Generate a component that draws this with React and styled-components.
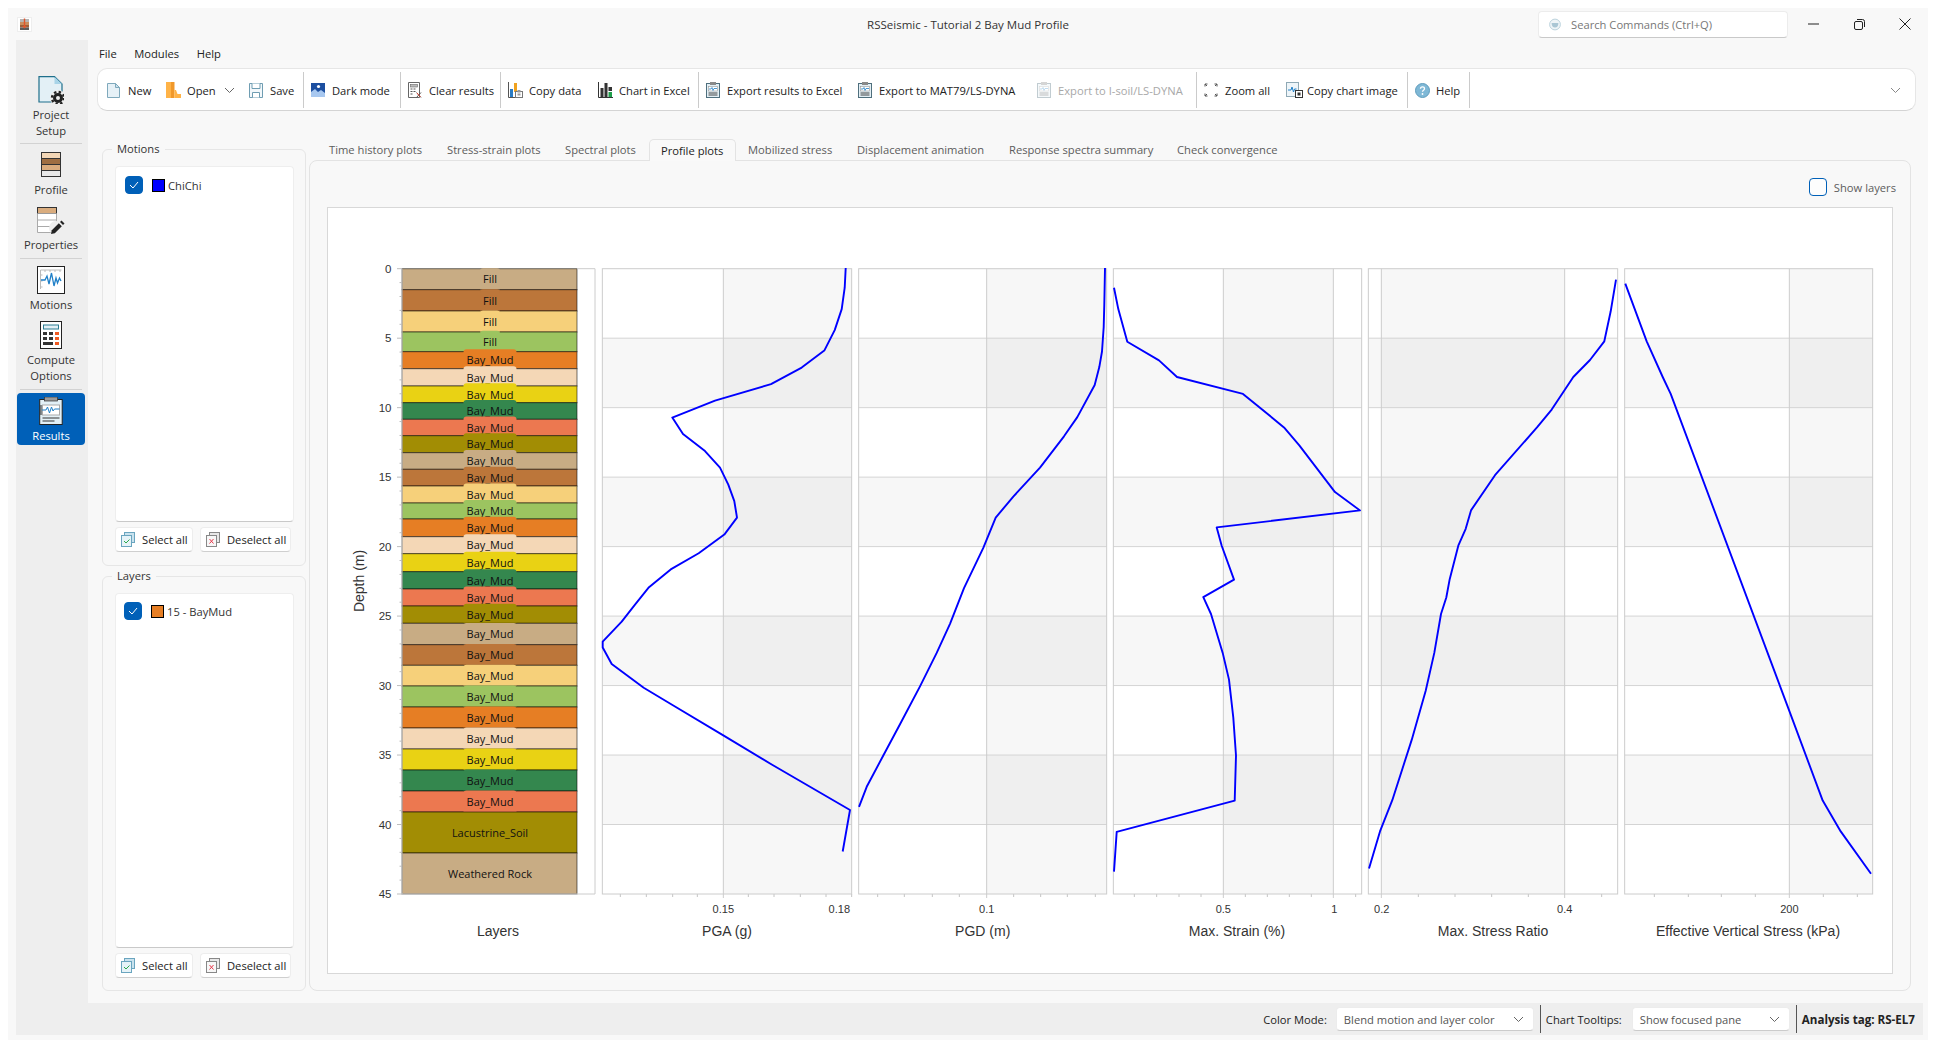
import React from "react";
import styled, { createGlobalStyle } from "styled-components";

const UI_FONT = `"Open Sans", "Noto Sans", sans-serif`;
const CHART_FONT = `"Liberation Sans", Arial, sans-serif`;

const GlobalStyle = createGlobalStyle`
  html, body {
    margin: 0;
    padding: 0;
    background: #ffffff;
    overflow: hidden;
  }
  body {
    font-family: ${UI_FONT};
    font-size: 11.2px;
    color: #222;
  }
  * { box-sizing: border-box; }
  svg { display: block; flex: none; }
`;

const Window = styled.div`
  width: 1920px;
  height: 1032px;
  margin: 8px;
  background: #f8f8f8;
  display: flex;
  flex-direction: column;
`;

const TitleBar = styled.div`
  height: 32px;
  flex: none;
  display: grid;
  grid-template-columns: 1fr auto 1fr;
  align-items: center;
`;

const TitleLeft = styled.div`
  padding-left: 9px;
`;

const TitleText = styled.div`
  font-size: 11.5px;
  color: #333;
`;

const TitleRight = styled.div`
  display: flex;
  justify-content: flex-end;
  align-items: center;
`;

const SearchBox = styled.div`
  width: 250px;
  height: 27px;
  margin-right: 2px;
  padding-left: 10px;
  display: flex;
  align-items: center;
  gap: 10px;
  background: #fff;
  border: 1px solid #ececec;
  border-bottom-color: #c9c9c9;
  border-radius: 4px;
  color: #777;
`;

const WinButton = styled.div`
  width: 46px;
  height: 32px;
  display: flex;
  align-items: center;
  justify-content: center;
`;

const Body = styled.div`
  flex: 1;
  min-height: 0;
  display: flex;
  padding: 0 5px 0 8px;
`;

const Sidebar = styled.nav`
  width: 72px;
  flex: none;
  background: #eeeeee;
  padding: 36px 3px 0 1px;
  display: flex;
  flex-direction: column;
  color: #333;
`;

const SideItem = styled.div`
  margin-top: ${(p) => p.$mt || 0}px;
  display: flex;
  flex-direction: column;
  align-items: center;
`;

const SideLabel = styled.div`
  margin-top: ${(p) => p.$mt || 3}px;
  line-height: 16px;
  text-align: center;
`;

const SideDivider = styled.div`
  height: 1px;
  flex: none;
  margin: ${(p) => p.$mt || 4}px 3px 0;
  background: #d2d2d2;
`;

const ResultsItem = styled.div`
  margin-top: 3px;
  height: 52px;
  padding-top: 4px;
  border-radius: 4px;
  background: #0060b8;
  display: flex;
  flex-direction: column;
  align-items: center;
  color: #fff;
`;

const Main = styled.main`
  flex: 1;
  min-width: 0;
  display: flex;
  flex-direction: column;
  padding-bottom: 12px;
`;

const MenuBar = styled.div`
  height: 28px;
  flex: none;
  padding: 0 0 2px 11px;
  display: flex;
  align-items: center;
  gap: 17.5px;
  color: #222;
`;

const Toolbar = styled.div`
  height: 43px;
  flex: none;
  margin: 0 7px 0 9px;
  padding: 1px 14px 0 9px;
  display: flex;
  align-items: center;
  background: #fff;
  border: 1px solid #e6e6e6;
  border-bottom-color: #d4d4d4;
  border-radius: 10px;
  white-space: nowrap;
`;

const ToolButton = styled.div`
  width: ${(p) => p.$w}px;
  flex: none;
  display: flex;
  align-items: center;
  color: ${(p) => (p.$disabled ? "#a8a8a8" : "#222")};
`;

const IconSlot = styled.span`
  width: 21px;
  flex: none;
  display: flex;
  align-items: center;
`;

const ToolSeparator = styled.div`
  width: 1px;
  height: 36px;
  flex: none;
  margin: -1px 7px 0 0;
  background: #cbcbcb;
`;

const ToolChevron = styled.div`
  margin-left: auto;
`;

const OpenChevron = styled.span`
  margin-left: 8px;
`;

const Content = styled.div`
  flex: 1;
  min-height: 0;
  margin-top: 28px;
  display: flex;
`;

const LeftColumn = styled.div`
  width: 207px;
  flex: none;
  margin-left: 14px;
  display: flex;
  flex-direction: column;
  gap: 2px;
  padding-top: 2px;
`;

const Group = styled.fieldset`
  width: 204px;
  height: ${(p) => p.$h}px;
  flex: none;
  margin: 0;
  padding: 1px 11px 13px 12px;
  border: 1px solid #e6e6e6;
  border-radius: 6px;
  min-width: 0;
`;

const GroupLegend = styled.legend`
  margin-left: -3px;
  padding: 0 5px;
  line-height: 16px;
  color: #333;
`;

const ListBox = styled.div`
  height: ${(p) => p.$h}px;
  margin-top: 8px;
  background: #fff;
  border: 1px solid #eeeeee;
  border-bottom-color: #c9c9c9;
  border-radius: 4px;
  padding: ${(p) => p.$top}px 0 0 ${(p) => p.$left}px;
`;

const ListRow = styled.div`
  display: flex;
  align-items: center;
  color: #333;
`;

const CheckBox = styled.span`
  width: 18px;
  height: 18px;
  flex: none;
  border-radius: 4px;
  background: ${(p) => (p.$on ? "#0060b8" : "#fdfdfd")};
  border: 1px solid #0060b8;
  display: flex;
  align-items: center;
  justify-content: center;
`;

const Swatch = styled.span`
  width: 13px;
  height: 13px;
  flex: none;
  margin: 0 3px 0 9px;
  background: ${(p) => p.$color};
  border: 1px solid #000;
`;

const ButtonRow = styled.div`
  margin-top: 5px;
  display: flex;
  gap: 7px;
`;

const SmallButton = styled.div`
  width: ${(p) => p.$w}px;
  height: 25px;
  padding-left: 5px;
  display: flex;
  align-items: center;
  gap: 7px;
  background: #fff;
  border: 1px solid #ededed;
  border-bottom-color: #cfcfcf;
  border-radius: 4px;
  white-space: nowrap;
`;

const TabColumn = styled.div`
  flex: 1;
  min-width: 0;
  margin-right: 12px;
  display: flex;
  flex-direction: column;
`;

const TabRow = styled.div`
  height: 21px;
  flex: none;
  padding-left: 8px;
  display: flex;
  position: relative;
  z-index: 1;
`;

const Tab = styled.div`
  width: ${(p) => p.$w}px;
  height: ${(p) => (p.$active ? 22 : 21)}px;
  flex: none;
  padding-left: ${(p) => (p.$active ? 11 : 12)}px;
  display: flex;
  align-items: center;
  white-space: nowrap;
  color: ${(p) => (p.$active ? "#222" : "#5c5c5c")};
  background: ${(p) => (p.$active ? "#f9f9f9" : "transparent")};
  border: ${(p) => (p.$active ? "1px solid #e3e3e3" : "none")};
  border-bottom: none;
  border-radius: 5px 5px 0 0;
`;

const TabPanel = styled.div`
  flex: 1;
  min-height: 0;
  border: 1px solid #e3e3e3;
  border-radius: 8px;
  padding: 17px 17px 16px 17px;
  display: flex;
  flex-direction: column;
`;

const PanelOptions = styled.div`
  height: 18px;
  flex: none;
  margin: 0 -3px 11px 0;
  display: flex;
  justify-content: flex-end;
  align-items: center;
  gap: 7px;
  color: #5c5c5c;
`;

const ChartCard = styled.div`
  flex: 1;
  min-height: 0;
  background: #fff;
  border: 1px solid #d8d8d8;
`;

const Footer = styled.footer`
  height: 32px;
  flex: none;
  margin: 0 5px 5px 8px;
  padding-right: 8px;
  background: #eeeeee;
  display: flex;
  justify-content: flex-end;
  align-items: center;
  white-space: nowrap;
`;

const FooterLabel = styled.span`
  margin-right: ${(p) => p.$mr}px;
  color: #222;
`;

const Combo = styled.div`
  width: ${(p) => p.$w}px;
  height: 24px;
  padding: 0 9px 0 7px;
  display: flex;
  align-items: center;
  justify-content: space-between;
  background: #fff;
  border: 1px solid #ececec;
  border-bottom-color: #cbcbcb;
  border-radius: 4px;
  color: #555;
`;

const FooterSeparator = styled.span`
  width: 1px;
  height: 28px;
  margin: 0 5px 0 6px;
  background: #555;
`;

const TagText = styled.b`
  font-size: 11.6px;
  font-weight: 700;
  color: #222;
`;

const AxisTitle = styled.text`
  font-family: ${CHART_FONT};
  font-size: 14px;
  fill: #333;
  text-anchor: middle;
`;

const TickText = styled.text`
  font-family: ${CHART_FONT};
  font-size: 11px;
  fill: #333;
  text-anchor: middle;
`;

const DepthText = styled.text`
  font-family: ${CHART_FONT};
  font-size: 11.5px;
  fill: #333;
  text-anchor: end;
`;

const LayerText = styled.text`
  font-family: ${UI_FONT};
  font-size: 11px;
  fill: #111;
  text-anchor: middle;
`;

/* chart data, in screen pixels of the plot area */
const Y0 = 268.7;
const Y45 = 894;
const depthY = (d) => Y0 + ((Y45 - Y0) * d) / 45;
const zoomY = (Y) => 260 + Y / 2.24;

const COLORS = {
  tan: "#c8ac84",
  brown: "#bc763a",
  light: "#f6d07a",
  green: "#9cc460",
  orange: "#e67e24",
  peach: "#f4d7b6",
  yellow: "#e9d214",
  dark: "#34874e",
  salmon: "#ec7850",
  olive: "#a28d04",
};

const LAYER_CYCLE = ["tan", "brown", "light", "green", "orange", "peach", "yellow", "dark", "salmon", "olive"];
const LAYER_ENDS = [
  289.7, 311, 332, 351.7, 368.7, 386, 402.7, 419.3, 435.7, 452.7, 469.3, 486, 503, 519, 536.7, 553.7, 571.7, 589, 606,
  623.3, 644.7, 665.3, 686, 707, 728, 749, 770, 791, 812, 853, 894,
];
const LAYERS = LAYER_ENDS.map((end, i) => {
  let name = "Bay_Mud";
  if (i < 4) name = "Fill";
  if (i === 29) name = "Lacustrine_Soil";
  if (i === 30) name = "Weathered Rock";
  return {
    end,
    top: i === 0 ? Y0 : LAYER_ENDS[i - 1],
    name,
    color: COLORS[LAYER_CYCLE[i % 10]],
    pill: name === "Fill" ? 20 : name === "Bay_Mud" ? 53 : 0,
  };
});

const PLOTS = [
  {
    title: "PGA (g)",
    titleX: 727,
    ox: 600,
    left: 7,
    right: 755,
    majors: [370],
    minors: [61, 139, 218, 292, 445, 522, 601, 678, 755],
    labels: [["0.15", 370], ["0.18", 718]],
    shade: [370, 755],
    curve: [
      [737, 18], [734, 62], [725, 110], [704, 157], [673, 203], [605, 241], [513, 278], [345, 315], [217, 353],
      [249, 390], [315, 428], [360, 465], [385, 503], [403, 540], [411, 577], [373, 615], [296, 657], [212, 693],
      [147, 733], [105, 772], [65, 810], [8, 855], [8, 868], [35, 905], [131, 958], [220, 998], [370, 1065],
      [515, 1130], [750, 1232], [728, 1325],
    ],
  },
  {
    title: "PGD (m)",
    titleX: 982.7,
    ox: 600,
    left: 776,
    right: 1520,
    majors: [1160],
    minors: [833, 913, 997, 1078, 1241, 1322, 1402, 1486],
    labels: [["0.1", 1160]],
    shade: [1160, 1520],
    curve: [
      [1515, 18], [1513, 100], [1511, 150], [1506, 205], [1498, 240], [1484, 280], [1432, 352], [1392, 395],
      [1320, 465], [1240, 530], [1187, 577], [1150, 645], [1092, 735], [1050, 815], [1010, 880], [960, 955],
      [900, 1040], [850, 1110], [800, 1180], [777, 1225],
    ],
  },
  {
    title: "Max. Strain (%)",
    titleX: 1237,
    ox: 1105,
    left: 25,
    right: 770,
    majors: [355, 685],
    minors: [88, 155, 222, 288, 421, 487, 553, 619, 752],
    labels: [["0.5", 355], ["1", 688]],
    shade: [355, 685],
    curve: [
      [27, 62], [40, 110], [67, 183], [162, 225], [216, 262], [414, 300], [537, 375], [583, 415], [690, 520],
      [765, 561], [335, 599], [350, 640], [387, 716], [295, 755], [318, 793], [353, 880], [372, 940], [385, 1025],
      [393, 1110], [389, 1211], [35, 1281], [27, 1370],
    ],
  },
  {
    title: "Max. Stress Ratio",
    titleX: 1493,
    ox: 1105,
    left: 790,
    right: 1538,
    majors: [829, 1379],
    minors: [940, 1050, 1160, 1270, 1490],
    labels: [["0.2", 830], ["0.4", 1379]],
    shade: [829, 1379],
    curve: [
      [1533, 44], [1517, 115], [1498, 182], [1455, 224], [1405, 262], [1340, 335], [1296, 375], [1170, 482],
      [1098, 561], [1082, 602], [1060, 640], [1034, 715], [1024, 756], [1008, 793], [988, 880], [962, 965],
      [920, 1075], [862, 1210], [825, 1280], [792, 1363],
    ],
  },
  {
    title: "Effective Vertical Stress (kPa)",
    titleX: 1748,
    ox: 1610,
    left: 44,
    right: 788,
    majors: [538],
    minors: [133, 235, 334, 436, 640, 742],
    labels: [["200", 538]],
    shade: [538, 788],
    curve: [
      [46, 53], [110, 182], [158, 262], [182, 300], [538, 1010], [638, 1211], [692, 1280], [783, 1375],
    ],
  },
];

const BANDS = [5, 15, 25, 35];
const GRID_DEPTHS = [5, 10, 15, 20, 25, 30, 35, 40];

const Plot = ({ plot }) => {
  const x = (X) => plot.ox + X / 3;
  const left = x(plot.left);
  const right = x(plot.right);
  const points = plot.curve.map(([X, Y]) => `${x(X).toFixed(1)},${zoomY(Y).toFixed(1)}`).join(" ");
  return (
    <g>
      <rect x={left} y={Y0} width={right - left} height={Y45 - Y0} fill="#fff" />
      {BANDS.map((d) => (
        <rect key={d} x={left} y={depthY(d)} width={right - left} height={depthY(5) - Y0} fill="#f7f7f7" />
      ))}
      <rect
        x={x(plot.shade[0])}
        y={Y0}
        width={x(plot.shade[1]) - x(plot.shade[0])}
        height={Y45 - Y0}
        fill="#000"
        fillOpacity="0.03"
      />
      {GRID_DEPTHS.map((d) => (
        <line key={d} x1={left} x2={right} y1={depthY(d)} y2={depthY(d)} stroke="#d4d4d4" />
      ))}
      {plot.majors.map((m) => (
        <line key={m} x1={x(m)} x2={x(m)} y1={Y0} y2={Y45 + 4} stroke="#cdcdcd" />
      ))}
      {plot.minors.map((m) => (
        <line key={m} x1={x(m)} x2={x(m)} y1={Y45} y2={Y45 + 3} stroke="#c4c4c4" />
      ))}
      <rect x={left} y={Y0} width={right - left} height={Y45 - Y0} fill="none" stroke="#cccccc" />
      <polyline points={points} fill="none" stroke="#0000ff" strokeWidth="1.9" strokeLinejoin="round" />
      {plot.labels.map(([text, X]) => (
        <TickText key={text} x={x(X)} y={913}>
          {text}
        </TickText>
      ))}
      <AxisTitle x={plot.titleX} y={936}>
        {plot.title}
      </AxisTitle>
    </g>
  );
};

const LayersPlot = () => (
  <g>
    <rect x="402" y={Y0} width="193" height={Y45 - Y0} fill="#fff" />
    {LAYERS.map((layer, i) => {
      const mid = (layer.top + layer.end) / 2;
      const isPill = layer.pill > 0;
      return (
        <g key={i}>
          <rect
            x="402"
            y={layer.top}
            width="175"
            height={layer.end - layer.top}
            fill={layer.color}
            stroke="#000"
            strokeOpacity="0.55"
          />
          {isPill && (
            <rect
              x={490 - layer.pill / 2}
              y={mid + 1 - 12}
              width={layer.pill}
              height="24"
              rx="3"
              fill={layer.color}
            />
          )}
          <LayerText x="490" y={mid + 4.2}>
            {layer.name}
          </LayerText>
        </g>
      );
    })}
    <path d={`M402 ${Y0}V${Y45}H595V${Y0}H577`} fill="none" stroke="#cccccc" />
    {Array.from({ length: 46 }, (_, d) => (
      <line
        key={d}
        x1={d % 5 === 0 ? 397 : 399.5}
        x2="402"
        y1={depthY(d)}
        y2={depthY(d)}
        stroke="#bdbdbd"
      />
    ))}
    {Array.from({ length: 10 }, (_, i) => (
      <DepthText key={i} x="391.5" y={depthY(i * 5) + 4}>
        {i * 5}
      </DepthText>
    ))}
    <AxisTitle transform="translate(364 581) rotate(-90)">Depth (m)</AxisTitle>
    <AxisTitle x="498" y="936">
      Layers
    </AxisTitle>
  </g>
);

const ProfileChart = () => (
  <svg width="1564" height="765" viewBox="328 208 1564 765">
    <LayersPlot />
    {PLOTS.map((plot) => (
      <Plot key={plot.title} plot={plot} />
    ))}
  </svg>
);

/* icons */
const Chevron = ({ color = "#666" }) => (
  <svg width="11" height="7" viewBox="0 0 11 7">
    <path d="M1 1l4.5 4.5L10 1" fill="none" stroke={color} />
  </svg>
);

const AppIcon = () => (
  <svg width="15" height="15" viewBox="0 0 15 15">
    <rect x=".5" y=".5" width="14" height="14" fill="#fff" stroke="#eee" />
    <rect x="3" y="2" width="9" height="3" fill="#b5b5b5" />
    <rect x="3" y="5" width="9" height="3" fill="#c98d5e" />
    <rect x="3" y="8" width="9" height="2.5" fill="#9a5f3a" />
    <rect x="3" y="10.5" width="9" height="2.5" fill="#5a5a5a" />
    <path d="M7.5 1.5v8" stroke="#e0552c" strokeWidth="1.4" />
    <path d="M5 9h5l-2.5 2.5z" fill="#e0552c" />
  </svg>
);

const SearchIcon = () => (
  <svg width="12" height="13" viewBox="0 0 12 13">
    <circle cx="6" cy="6.5" r="5.4" fill="#eef4f7" stroke="#bcd3dd" />
    <path d="M2.6 5h6.8c0 3-1.4 4.6-3.4 4.6S2.6 8 2.6 5z" fill="#a9c6d4" />
  </svg>
);

const NewIcon = () => (
  <svg width="13" height="15" viewBox="0 0 13 15">
    <path d="M.5.5h8l4 4v10H.5z" fill="#e6f1f7" stroke="#7fa9bc" />
    <path d="M8.5.5v4h4z" fill="#cbe3ef" stroke="#7fa9bc" />
  </svg>
);

const OpenIcon = () => (
  <svg width="15" height="16" viewBox="0 0 15 16">
    <path d="M0 0h5v16H0z" fill="#ffb347" />
    <path d="M5 0h3.5v16H5z" fill="#f0982a" />
    <path d="M8.5 8H10l1.500 4H15v4H8.500z" fill="#ffb347" />
  </svg>
);

const SaveIcon = () => (
  <svg width="14" height="15" viewBox="0 0 14 15">
    <path d="M.5.5h13v14H.5z" fill="#f3f8fb" stroke="#6f9db2" />
    <path d="M3 .5v5h8v-5M3.5 14.5v-5h7v5" fill="#fff" stroke="#6f9db2" />
  </svg>
);

const PictureIcon = () => (
  <svg width="14" height="14" viewBox="0 0 14 14">
    <rect width="14" height="14" fill="#1c4fa0" />
    <path d="M0 14V9l4-3 3 3 3-2 4 3v4z" fill="#a8c8f0" />
    <circle cx="7.5" cy="3.5" r="1.6" fill="#fff" />
  </svg>
);

const ClearIcon = () => (
  <svg width="14" height="16" viewBox="0 0 14 16">
    <path d="M.5.5h11v15H.5z" fill="#fff" stroke="#666" />
    <rect x="2.5" y="2.5" width="7" height="2.5" fill="#bbb" stroke="#666" strokeWidth=".6" />
    <path d="M2.5 7h2M5.5 7h2M2.5 9.5h2M5.5 9.5h2M2.5 12h2" stroke="#555" strokeWidth="1.2" />
    <path d="M8.500 10.500l4.500 5M13 10.500l-4.500 5" stroke="#555" />
    <path d="M9 11l3.5 4" stroke="#e04a3a" />
  </svg>
);

const CopyDataIcon = () => (
  <svg width="15" height="16" viewBox="0 0 15 16">
    <path d="M.5 0v15.5H9" fill="none" stroke="#555" />
    <rect x="2" y="7" width="3" height="8" fill="#2b7cc4" />
    <rect x="6" y="1" width="3" height="9" fill="#f0a21e" />
    <rect x="7.5" y="9.5" width="7" height="6" fill="#fff" stroke="#777" />
    <rect x="9.5" y="8" width="3" height="2.5" fill="#999" />
    <rect x="9.5" y="11.5" width="3" height="2" fill="#999" />
  </svg>
);

const ChartExcelIcon = () => (
  <svg width="15" height="16" viewBox="0 0 15 16">
    <path d="M.5 0v15.5H15" fill="none" stroke="#333" />
    <rect x="2.5" y="6" width="3" height="9" fill="#333" />
    <rect x="6.5" y="1" width="3" height="14" fill="#333" />
    <rect x="10.5" y="5" width="3.5" height="4" fill="#333" />
    <rect x="10.5" y="10" width="3.5" height="5" fill="#1e9e4a" />
  </svg>
);

const ExportIcon = ({ faded }) => (
  <svg width="14" height="16" viewBox="0 0 14 16" opacity={faded ? 0.35 : 1}>
    <rect x=".5" y="1.5" width="13" height="14" fill="#e3eff5" stroke="#4f6f7d" />
    <rect x="4" y="0" width="6" height="3" fill="#8a8a8a" />
    <rect x="2.5" y="4.5" width="9" height="4.5" fill="#fff" stroke="#999" strokeWidth=".6" />
    <path d="M3 7h2l1-1.500 1 3 1-2h3" fill="none" stroke="#2080c8" strokeWidth=".8" />
    <path d="M2.5 11h9M2.5 13h9" stroke="#444" />
  </svg>
);

const ZoomAllIcon = () => (
  <svg width="14" height="14" viewBox="0 0 14 14" fill="none" stroke="#555">
    <path d="M1 3.5V1h2.500M1 1l2 2M13 3.500V1h-2.500M13 1l-2 2M1 10.500V13h2.500M1 13l2-2M13 10.500V13h-2.500M13 13l-2-2" />
  </svg>
);

const CopyChartIcon = () => (
  <svg width="17" height="16" viewBox="0 0 17 16">
    <rect x=".5" y=".5" width="12" height="14" fill="#eef5f9" stroke="#8fa9b5" />
    <path d="M2 8h3l1-3 1.500 5 1-3h2" fill="none" stroke="#2080c8" />
    <rect x="9.5" y="8.5" width="7" height="7" fill="#fff" stroke="#333" />
    <rect x="11.5" y="10.5" width="3" height="3" fill="#333" />
  </svg>
);

const HelpIcon = () => (
  <svg width="15" height="15" viewBox="0 0 15 15">
    <circle cx="7.5" cy="7.5" r="7" fill="#7fb8d6" stroke="#5f9cbc" />
    <path d="M5.5 5.800c0-1.200 1-1.900 2-1.900s2 .7 2 1.800c0 1.500-2 1.500-2 3" fill="none" stroke="#fff" strokeWidth="1.3" />
    <circle cx="7.5" cy="11" r=".9" fill="#fff" />
  </svg>
);

const CheckMark = () => (
  <svg width="10" height="8" viewBox="0 0 10 8">
    <path d="M1 4l3 3 5-6" fill="none" stroke="#fff" />
  </svg>
);

const SelectIcon = ({ cross }) => (
  <svg width="14" height="15" viewBox="0 0 14 15">
    <rect x="3.5" y=".5" width="10" height="10" fill={cross ? "#e8e8e8" : "#c9e2ee"} stroke={cross ? "#888" : "#6aa5bf"} />
    <rect x=".5" y="3.5" width="10" height="11" fill={cross ? "#f7f7f7" : "#e6f3f8"} stroke={cross ? "#888" : "#6aa5bf"} />
    {cross ? (
      <path d="M3.5 7l4 4.500M7.500 7l-4 4.500" stroke="#e8384a" />
    ) : (
      <path d="M3 9l2 2 3.500-3.500" fill="none" stroke="#2ba84a" />
    )}
  </svg>
);

const ProjectIcon = () => (
  <svg width="26" height="28" viewBox="0 0 26 28">
    <path d="M1 .7h15.500L24 8v18H1z" fill="#e3f0f6" stroke="#1f6f8b" strokeWidth="1.2" />
    <path d="M16.500.7L24 8h-7.500z" fill="#a8d4e8" />
    <circle cx="20" cy="22" r="8" fill="#eeeeee" />
    <circle cx="20" cy="22" r="3.5" fill="none" stroke="#222" strokeWidth="3" />
    <circle cx="20" cy="22" r="6" fill="none" stroke="#222" strokeWidth="2.4" strokeDasharray="2.4 2.3" />
  </svg>
);

const ProfileIcon = () => (
  <svg width="20" height="25" viewBox="0 0 20 25" stroke="#333">
    <rect x=".5" y=".5" width="19" height="6" fill="#f2d6b6" />
    <rect x=".5" y="6.5" width="19" height="6" fill="#9e6e42" />
    <rect x=".5" y="12.5" width="19" height="6" fill="#d9ac7e" />
    <rect x=".5" y="18.5" width="19" height="6" fill="#e8e8e8" />
  </svg>
);

const PropertiesIcon = () => (
  <svg width="28" height="28" viewBox="0 0 28 28">
    <rect x=".5" y=".5" width="19" height="6" fill="#d9ac7e" stroke="#333" />
    <path d="M.5 6.500v19h19v-19M.5 13h19M.5 19.500h19" fill="#fff" stroke="#aaa" />
    <circle cx="19" cy="21" r="7" fill="#eeeeee" />
    <path d="M14 27l.8-3.800 7-7 3 3-7 7z" fill="#222" />
    <path d="M23 15l1.500-1.500 3 3L26 18z" fill="#222" />
  </svg>
);

const MotionsIcon = () => (
  <svg width="28" height="28" viewBox="0 0 28 28">
    <rect x=".5" y=".5" width="27" height="27" fill="#fff" stroke="#222" />
    <path d="M3.500 4h21M3.500 4v19M8 4v2M13 4v2M18 4v2M23 4v2M3.500 9h2M3.500 15h2M3.500 21h2" stroke="#bbb" fill="none" />
    <path d="M4 14h4l2-4 2 8 2.500-11 2.500 13 2-8 1.500 5 2-5 1.500 3" fill="none" stroke="#2080c8" strokeWidth="1.3" />
  </svg>
);

const ComputeIcon = () => (
  <svg width="22" height="28" viewBox="0 0 22 28">
    <rect x=".5" y=".5" width="21" height="27" fill="#fff" stroke="#222" />
    <rect x="3.5" y="4" width="15" height="4" fill="#e3f0f6" stroke="#2b7c92" />
    <path d="M3 11h4v3H3zM9 11h4v3H9zM3 16h4v3H3zM9 16h4v3H9zM3 21h10v3H3z" fill="#333" />
    <path d="M15 11h4v3h-4zM15 16h4v3h-4zM15 21h4v3h-4z" fill="#f05a22" />
  </svg>
);

const ResultsIcon = () => (
  <svg width="24" height="28" viewBox="0 0 24 28">
    <rect x=".7" y="2.5" width="22.5" height="25" fill="#e3f0f6" stroke="#222" />
    <rect x="5.5" y="0" width="13" height="4" fill="#9a9a9a" stroke="#333" strokeWidth=".7" />
    <rect x="3.5" y="8" width="17" height="10" fill="#fff" stroke="#aaa" />
    <path d="M3 13h4l1.500-3 2 6 2-6 1.500 4 1.500-2h5" fill="none" stroke="#2080c8" />
    <path d="M3.500 21h17M3.500 24h12" stroke="#333" />
    <path d="M2 8v10" stroke="#222" />
  </svg>
);

const TOOLS = [
  { label: "New", w: 59, icon: <NewIcon /> },
  { label: "Open", w: 83, icon: <OpenIcon />, menu: true },
  { label: "Save", w: 54, icon: <SaveIcon /> },
  { sep: true },
  { label: "Dark mode", w: 89, icon: <PictureIcon /> },
  { sep: true },
  { label: "Clear results", w: 92, icon: <ClearIcon /> },
  { sep: true },
  { label: "Copy data", w: 90, icon: <CopyDataIcon /> },
  { label: "Chart in Excel", w: 100, icon: <ChartExcelIcon /> },
  { sep: true },
  { label: "Export results to Excel", w: 152, icon: <ExportIcon /> },
  { label: "Export to MAT79/LS-DYNA", w: 179, icon: <ExportIcon /> },
  { label: "Export to I-soil/LS-DYNA", w: 159, icon: <ExportIcon faded />, disabled: true },
  { sep: true },
  { label: "Zoom all", w: 82, icon: <ZoomAllIcon /> },
  { label: "Copy chart image", w: 121, icon: <CopyChartIcon /> },
  { sep: true },
  { label: "Help", w: 54, icon: <HelpIcon /> },
  { sep: true },
];

const TABS = [
  { label: "Time history plots", w: 118 },
  { label: "Stress-strain plots", w: 118 },
  { label: "Spectral plots", w: 96 },
  { label: "Profile plots", w: 87, active: true },
  { label: "Mobilized stress", w: 109 },
  { label: "Displacement animation", w: 152 },
  { label: "Response spectra summary", w: 168 },
  { label: "Check convergence", w: 127 },
];

const SelectButtons = () => (
  <ButtonRow>
    <SmallButton $w={78}>
      <SelectIcon />
      Select all
    </SmallButton>
    <SmallButton $w={91}>
      <SelectIcon cross />
      Deselect all
    </SmallButton>
  </ButtonRow>
);

const App = () => (
  <>
    <GlobalStyle />
    <Window>
      <TitleBar>
        <TitleLeft>
          <AppIcon />
        </TitleLeft>
        <TitleText>RSSeismic - Tutorial 2 Bay Mud Profile</TitleText>
        <TitleRight>
          <SearchBox>
            <SearchIcon />
            Search Commands (Ctrl+Q)
          </SearchBox>
          <WinButton>
            <svg width="11" height="2" viewBox="0 0 11 2">
              <path d="M0 1h11" stroke="#222" />
            </svg>
          </WinButton>
          <WinButton>
            <svg width="11" height="11" viewBox="0 0 11 11" fill="none" stroke="#222">
              <rect x=".5" y="2.5" width="8" height="8" rx="1.5" />
              <path d="M3 .5h5.500a2 2 0 0 1 2 2V8" />
            </svg>
          </WinButton>
          <WinButton>
            <svg width="12" height="12" viewBox="0 0 12 12" fill="none" stroke="#222">
              <path d="M.5.5l11 11M11.500.5l-11 11" />
            </svg>
          </WinButton>
        </TitleRight>
      </TitleBar>
      <Body>
        <Sidebar>
          <SideItem>
            <ProjectIcon />
            <SideLabel>
              Project
              <br />
              Setup
            </SideLabel>
          </SideItem>
          <SideDivider />
          <SideItem $mt={8}>
            <ProfileIcon />
            <SideLabel $mt={5}>Profile</SideLabel>
          </SideItem>
          <SideItem $mt={9}>
            <PropertiesIcon />
            <SideLabel $mt={2}>Properties</SideLabel>
          </SideItem>
          <SideDivider $mt={5} />
          <SideItem $mt={7}>
            <MotionsIcon />
            <SideLabel>Motions</SideLabel>
          </SideItem>
          <SideItem $mt={8}>
            <ComputeIcon />
            <SideLabel>
              Compute
              <br />
              Options
            </SideLabel>
          </SideItem>
          <SideDivider $mt={5} />
          <ResultsItem>
            <ResultsIcon />
            <SideLabel>Results</SideLabel>
          </ResultsItem>
        </Sidebar>
        <Main>
          <MenuBar>
            <span>File</span>
            <span>Modules</span>
            <span>Help</span>
          </MenuBar>
          <Toolbar>
            {TOOLS.map((tool, i) =>
              tool.sep ? (
                <ToolSeparator key={i} />
              ) : (
                <ToolButton key={i} $w={tool.w} $disabled={tool.disabled}>
                  <IconSlot>{tool.icon}</IconSlot>
                  {tool.label}
                  {tool.menu && (
                    <OpenChevron>
                      <Chevron />
                    </OpenChevron>
                  )}
                </ToolButton>
              )
            )}
            <ToolChevron>
              <Chevron color="#888" />
            </ToolChevron>
          </Toolbar>
          <Content>
            <LeftColumn>
              <Group $h={425}>
                <GroupLegend>Motions</GroupLegend>
                <ListBox $h={356} $top={9} $left={9}>
                  <ListRow>
                    <CheckBox $on>
                      <CheckMark />
                    </CheckBox>
                    <Swatch $color="#0000ff" />
                    ChiChi
                  </ListRow>
                </ListBox>
                <SelectButtons />
              </Group>
              <Group $h={423}>
                <GroupLegend>Layers</GroupLegend>
                <ListBox $h={355} $top={8} $left={8}>
                  <ListRow>
                    <CheckBox $on>
                      <CheckMark />
                    </CheckBox>
                    <Swatch $color="#e67e24" />
                    15 - BayMud
                  </ListRow>
                </ListBox>
                <SelectButtons />
              </Group>
            </LeftColumn>
            <TabColumn>
              <TabRow>
                {TABS.map((tab) => (
                  <Tab key={tab.label} $w={tab.w} $active={tab.active}>
                    {tab.label}
                  </Tab>
                ))}
              </TabRow>
              <TabPanel>
                <PanelOptions>
                  <CheckBox />
                  Show layers
                </PanelOptions>
                <ChartCard>
                  <ProfileChart />
                </ChartCard>
              </TabPanel>
            </TabColumn>
          </Content>
        </Main>
      </Body>
      <Footer>
        <FooterLabel $mr={9}>Color Mode:</FooterLabel>
        <Combo $w={198}>
          Blend motion and layer color
          <Chevron />
        </Combo>
        <FooterSeparator />
        <FooterLabel $mr={10}>Chart Tooltips:</FooterLabel>
        <Combo $w={158}>
          Show focused pane
          <Chevron />
        </Combo>
        <FooterSeparator />
        <TagText>Analysis tag: RS-EL7</TagText>
      </Footer>
    </Window>
  </>
);

export default App;
